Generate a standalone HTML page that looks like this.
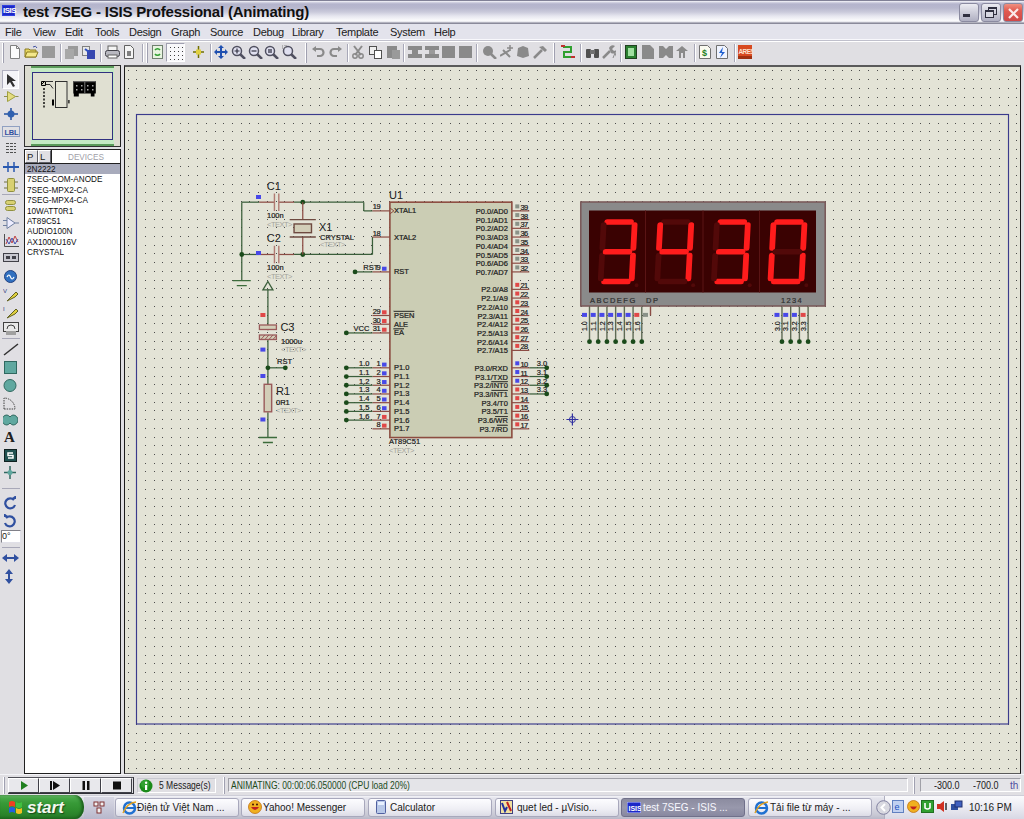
<!DOCTYPE html><html><head><meta charset="utf-8"><style>
*{margin:0;padding:0;box-sizing:border-box}
html,body{width:1024px;height:819px;overflow:hidden;background:#e0dfe3;font-family:"Liberation Sans",sans-serif;position:relative}
.a{position:absolute}
.t{position:absolute;white-space:nowrap;line-height:1}
</style></head><body><div class="a" style="left:0;top:0;width:1024px;height:24px;background:linear-gradient(#808096 0px,#808096 1px,#fbfbfd 1px,#d8d8e6 2px,#b4b4cc 4px,#b8b8ce 8px,#cacadb 12px,#e6e6ef 16px,#f4f4f8 19px,#fbfbfd 21px,#dcdce4 22px,#8a8a9a 23px,#8a8a9a 24px)"></div><div class="a" style="left:2px;top:5px;width:13px;height:11px;background:#1c28c8;border:1px solid #3040e0"></div><div class="t" style="left:3px;top:7px;font-size:8px;color:#fff;font-weight:bold;letter-spacing:-0.5px">ISIS</div><div class="t" id="title" style="left:23px;top:4px;font-size:15px;font-weight:bold;color:#101010;letter-spacing:-0.2px">test 7SEG - ISIS Professional (Animating)</div><div class="a" style="left:959px;top:3px;width:20px;height:19px;border-radius:3px;border:1px solid #8a8aa0;background:linear-gradient(#ececf2,#d0d0dc 45%,#b0b0c2)"><div class="a" style="left:3px;top:10px;width:7px;height:3px;background:#303040"></div></div><div class="a" style="left:981px;top:3px;width:20px;height:19px;border-radius:3px;border:1px solid #8a8aa0;background:linear-gradient(#ececf2,#d0d0dc 45%,#b0b0c2)"><div class="a" style="left:6px;top:3px;width:9px;height:8px;border:1px solid #303040;border-top-width:2px"></div><div class="a" style="left:3px;top:6px;width:9px;height:8px;border:1px solid #303040;border-top-width:2px;background:#d8d8e2"></div></div><div class="a" style="left:1003px;top:3px;width:20px;height:19px;border-radius:3px;border:1px solid #8a8aa0;background:linear-gradient(#f09080,#e05a50 40%,#d04848)"><svg class="a" style="left:2px;top:2px" width="15" height="15"><path d="M3 3L12 12M12 3L3 12" stroke="#fbe8e8" stroke-width="2.2"/></svg></div><div class="a" style="left:0;top:24px;width:1024px;height:15px;background:#e3e3ec"></div><div class="a" style="left:0;top:39px;width:1024px;height:1px;background:#f8f8fc"></div><div class="a" style="left:0;top:40px;width:1024px;height:1px;background:#c0c0cc"></div><div class="a" style="left:0;top:41px;width:1024px;height:1px;background:#fff"></div><div class="t" style="left:5px;top:27px;font-size:11px;color:#202020;letter-spacing:-0.3px">File</div><div class="t" style="left:33px;top:27px;font-size:11px;color:#202020;letter-spacing:-0.3px">View</div><div class="t" style="left:65px;top:27px;font-size:11px;color:#202020;letter-spacing:-0.3px">Edit</div><div class="t" style="left:95px;top:27px;font-size:11px;color:#202020;letter-spacing:-0.3px">Tools</div><div class="t" style="left:129px;top:27px;font-size:11px;color:#202020;letter-spacing:-0.3px">Design</div><div class="t" style="left:171px;top:27px;font-size:11px;color:#202020;letter-spacing:-0.3px">Graph</div><div class="t" style="left:210px;top:27px;font-size:11px;color:#202020;letter-spacing:-0.3px">Source</div><div class="t" style="left:253px;top:27px;font-size:11px;color:#202020;letter-spacing:-0.3px">Debug</div><div class="t" style="left:292px;top:27px;font-size:11px;color:#202020;letter-spacing:-0.3px">Library</div><div class="t" style="left:336px;top:27px;font-size:11px;color:#202020;letter-spacing:-0.3px">Template</div><div class="t" style="left:390px;top:27px;font-size:11px;color:#202020;letter-spacing:-0.3px">System</div><div class="t" style="left:434px;top:27px;font-size:11px;color:#202020;letter-spacing:-0.3px">Help</div><div class="a" style="left:0;top:42px;width:1024px;height:22px;background:#e0dfe3"></div><div class="a" style="left:2px;top:43px;width:2px;height:20px;border-left:1px solid #fff;border-right:1px solid #a0a0b0"></div><div class="a" style="left:146px;top:43px;width:2px;height:20px;border-left:1px solid #fff;border-right:1px solid #a0a0b0"></div><div class="a" style="left:305px;top:43px;width:2px;height:20px;border-left:1px solid #fff;border-right:1px solid #a0a0b0"></div><div class="a" style="left:553px;top:43px;width:2px;height:20px;border-left:1px solid #fff;border-right:1px solid #a0a0b0"></div><div class="a" style="left:60px;top:44px;width:1px;height:18px;background:#a8a8b8"></div><div class="a" style="left:61px;top:44px;width:1px;height:18px;background:#fff"></div><div class="a" style="left:100px;top:44px;width:1px;height:18px;background:#a8a8b8"></div><div class="a" style="left:101px;top:44px;width:1px;height:18px;background:#fff"></div><div class="a" style="left:142px;top:44px;width:1px;height:18px;background:#a8a8b8"></div><div class="a" style="left:143px;top:44px;width:1px;height:18px;background:#fff"></div><div class="a" style="left:210px;top:44px;width:1px;height:18px;background:#a8a8b8"></div><div class="a" style="left:211px;top:44px;width:1px;height:18px;background:#fff"></div><div class="a" style="left:347px;top:44px;width:1px;height:18px;background:#a8a8b8"></div><div class="a" style="left:348px;top:44px;width:1px;height:18px;background:#fff"></div><div class="a" style="left:403px;top:44px;width:1px;height:18px;background:#a8a8b8"></div><div class="a" style="left:404px;top:44px;width:1px;height:18px;background:#fff"></div><div class="a" style="left:476px;top:44px;width:1px;height:18px;background:#a8a8b8"></div><div class="a" style="left:477px;top:44px;width:1px;height:18px;background:#fff"></div><div class="a" style="left:580px;top:44px;width:1px;height:18px;background:#a8a8b8"></div><div class="a" style="left:581px;top:44px;width:1px;height:18px;background:#fff"></div><div class="a" style="left:620px;top:44px;width:1px;height:18px;background:#a8a8b8"></div><div class="a" style="left:621px;top:44px;width:1px;height:18px;background:#fff"></div><div class="a" style="left:694px;top:44px;width:1px;height:18px;background:#a8a8b8"></div><div class="a" style="left:695px;top:44px;width:1px;height:18px;background:#fff"></div><div class="a" style="left:734px;top:44px;width:1px;height:18px;background:#a8a8b8"></div><div class="a" style="left:735px;top:44px;width:1px;height:18px;background:#fff"></div><svg class="a" style="left:9px;top:45px" width="12" height="14"><path d="M1.5 .5h6l3 3v10h-9z" fill="#fbfbfb" stroke="#808080"/><path d="M7.5 .5v3h3" fill="none" stroke="#808080"/></svg><svg class="a" style="left:24px;top:45px" width="15" height="14"><path d="M1 4h4l1 1h6v7H1z" fill="#e8d860" stroke="#8a7a20"/><path d="M3 7h11l-2 5H1z" fill="#f4e88a" stroke="#8a7a20"/><path d="M9 2q3-2 4 1" fill="none" stroke="#4050a0"/></svg><svg class="a" style="left:42px;top:45px" width="14" height="14"><rect x="0" y="1" width="13" height="12" fill="#9a9a9a"/></svg><svg class="a" style="left:65px;top:45px" width="14" height="14"><rect x="3" y="1" width="10" height="10" fill="#9a9a9a"/><rect x="0" y="4" width="9" height="10" fill="#a8a8a8"/></svg><svg class="a" style="left:82px;top:45px" width="14" height="14"><rect x="0.5" y="1.5" width="7" height="9" fill="#e8e8e8" stroke="#808080"/><rect x="5" y="5" width="8" height="9" fill="#3848b0"/><path d="M3 4l4 3" stroke="#3050c0" stroke-width="2"/></svg><svg class="a" style="left:105px;top:45px" width="15" height="14"><rect x="3" y="1" width="9" height="5" fill="#f4f4f4" stroke="#606060"/><rect x="0.5" y="5.5" width="14" height="6" rx="2" fill="#b8b8c0" stroke="#404048"/><rect x="3" y="10" width="9" height="3" fill="#fff" stroke="#606060"/></svg><svg class="a" style="left:124px;top:45px" width="11" height="14"><path d="M.5 .5h6l3 3v10h-9z" fill="#f4f4f4" stroke="#606060"/><rect x="3" y="6" width="4" height="5" fill="#808080"/></svg><svg class="a" style="left:152px;top:45px" width="12" height="14"><rect x=".5" y=".5" width="10" height="13" fill="#e8f4e0" stroke="#708070"/><path d="M3 5a3 3 0 0 1 5 0M8 9a3 3 0 0 1-5 0" fill="none" stroke="#30a030" stroke-width="1.5"/></svg><div class="a" style="left:166px;top:43px;width:19px;height:19px;background:#f8f8fa;border:1px solid;border-color:#a0a0b0 #fff #fff #a0a0b0"></div><svg class="a" style="left:168px;top:45px" width="16" height="16"><rect x="2" y="2" width="1" height="1" fill="#404040"/><rect x="2" y="6" width="1" height="1" fill="#404040"/><rect x="2" y="10" width="1" height="1" fill="#404040"/><rect x="2" y="14" width="1" height="1" fill="#404040"/><rect x="6" y="2" width="1" height="1" fill="#404040"/><rect x="6" y="6" width="1" height="1" fill="#404040"/><rect x="6" y="10" width="1" height="1" fill="#404040"/><rect x="6" y="14" width="1" height="1" fill="#404040"/><rect x="10" y="2" width="1" height="1" fill="#404040"/><rect x="10" y="6" width="1" height="1" fill="#404040"/><rect x="10" y="10" width="1" height="1" fill="#404040"/><rect x="10" y="14" width="1" height="1" fill="#404040"/><rect x="14" y="2" width="1" height="1" fill="#404040"/><rect x="14" y="6" width="1" height="1" fill="#404040"/><rect x="14" y="10" width="1" height="1" fill="#404040"/><rect x="14" y="14" width="1" height="1" fill="#404040"/></svg><svg class="a" style="left:193px;top:45px" width="11" height="14"><path d="M5.5 1v12M0 7h11" stroke="#707000" stroke-width="1.5"/><rect x="3" y="4.5" width="5" height="5" fill="#e0d040"/></svg><svg class="a" style="left:214px;top:45px" width="14" height="14"><path d="M7 0l3 3H8v3h3V4l3 3-3 3V8H8v3h2l-3 3-3-3h2V8H3v2L0 7l3-3v2h3V3H4z" fill="#2050b0"/></svg><svg class="a" style="left:231px;top:45px" width="15" height="14"><circle cx="6" cy="6" r="4.5" fill="#e0e0f0" stroke="#505060" stroke-width="1.5"/><path d="M9 9l5 5" stroke="#505060" stroke-width="2.5"/><path d="M3.5 6h5M6 3.5v5" stroke="#303040" stroke-width="1.2"/></svg><svg class="a" style="left:248px;top:45px" width="15" height="14"><circle cx="6" cy="6" r="4.5" fill="#e0e0f0" stroke="#505060" stroke-width="1.5"/><path d="M9 9l5 5" stroke="#505060" stroke-width="2.5"/><path d="M3.5 6h5" stroke="#303040" stroke-width="1.2"/></svg><svg class="a" style="left:264px;top:45px" width="15" height="14"><circle cx="6" cy="6" r="4.5" fill="#e0e0f0" stroke="#505060" stroke-width="1.5"/><path d="M9 9l5 5" stroke="#505060" stroke-width="2.5"/><rect x="4" y="4" width="4" height="4" fill="#707080"/></svg><svg class="a" style="left:282px;top:45px" width="15" height="14"><circle cx="6" cy="6" r="4.5" fill="#e0e0f0" stroke="#505060" stroke-width="1.5"/><path d="M9 9l5 5" stroke="#505060" stroke-width="2.5"/><rect x="0" y="0" width="4" height="3" fill="none" stroke="#808080" stroke-dasharray="1 1"/></svg><svg class="a" style="left:312px;top:45px" width="13" height="14"><path d="M3 4h5a3.5 3.5 0 0 1 0 7H5" fill="none" stroke="#8a8a8a" stroke-width="2.2"/><path d="M0 4l4-3v6z" fill="#8a8a8a"/></svg><svg class="a" style="left:329px;top:45px" width="13" height="14"><path d="M10 4H5a3.5 3.5 0 0 0 0 7h3" fill="none" stroke="#8a8a8a" stroke-width="2.2"/><path d="M13 4l-4-3v6z" fill="#8a8a8a"/></svg><svg class="a" style="left:352px;top:45px" width="12" height="14"><path d="M2 1l7 9M10 1L3 10" stroke="#8a8a8a" stroke-width="2"/><circle cx="3" cy="11" r="2.2" fill="none" stroke="#8a8a8a" stroke-width="1.5"/><circle cx="9" cy="11" r="2.2" fill="none" stroke="#8a8a8a" stroke-width="1.5"/></svg><svg class="a" style="left:369px;top:45px" width="14" height="14"><rect x=".5" y="1.5" width="7" height="8" fill="#eee" stroke="#505050"/><rect x="5.5" y="5.5" width="7" height="8" fill="#fff" stroke="#505050"/></svg><svg class="a" style="left:387px;top:45px" width="14" height="14"><rect x="0" y="1" width="10" height="12" fill="#8a8a8a"/><rect x="5" y="5" width="8" height="9" fill="#9a9a9a"/></svg><svg class="a" style="left:408px;top:45px" width="15" height="14"><rect x="0" y="1" width="14" height="4" fill="#8a8a8a"/><rect x="4" y="5" width="6" height="4" fill="#8a8a8a"/><rect x="0" y="9" width="14" height="4" fill="#8a8a8a"/></svg><svg class="a" style="left:425px;top:45px" width="15" height="14"><rect x="0" y="1" width="14" height="4" fill="#8a8a8a"/><rect x="4" y="5" width="6" height="4" fill="#9a9a9a"/><rect x="0" y="9" width="14" height="4" fill="#8a8a8a"/></svg><svg class="a" style="left:442px;top:45px" width="14" height="14"><rect x="0" y="1" width="13" height="12" fill="#8a8a8a"/></svg><svg class="a" style="left:459px;top:45px" width="14" height="14"><rect x="0" y="1" width="13" height="12" fill="#8a8a8a"/></svg><svg class="a" style="left:482px;top:45px" width="15" height="14"><circle cx="6" cy="6" r="5" fill="#8a8a8a"/><path d="M9 9l5 5" stroke="#8a8a8a" stroke-width="2.5"/></svg><svg class="a" style="left:500px;top:45px" width="14" height="14"><path d="M0 11l10-6M3 5l7 7" stroke="#8a8a8a" stroke-width="2"/><path d="M10 0v6M7 3h6" stroke="#8a8a8a" stroke-width="1.5"/></svg><svg class="a" style="left:516px;top:45px" width="14" height="14"><path d="M2 3l5-2 5 2 1 8-6 2-6-2z" fill="#8a8a8a"/></svg><svg class="a" style="left:533px;top:45px" width="14" height="14"><path d="M1 13l8-8" stroke="#8a8a8a" stroke-width="2.5"/><path d="M6 2l4-1 4 4-2 2z" fill="#8a8a8a"/></svg><svg class="a" style="left:561px;top:45px" width="14" height="14"><path d="M2 2h8v5H3v5h9" fill="none" stroke="#30a030" stroke-width="2"/><path d="M0 1h4M10 12h4" stroke="#c03030" stroke-width="2"/></svg><svg class="a" style="left:586px;top:45px" width="13" height="14"><rect x="0" y="4" width="5" height="9" rx="1" fill="#505050"/><rect x="8" y="4" width="5" height="9" rx="1" fill="#505050"/><rect x="4" y="5" width="5" height="4" fill="#707070"/></svg><svg class="a" style="left:602px;top:45px" width="14" height="14"><path d="M1 13l7-7" stroke="#8a8a8a" stroke-width="2.5"/><path d="M7 3a4 4 0 0 1 6-2l-3 3 2 2 3-1a4 4 0 0 1-6 3z" fill="#8a8a8a"/><path d="M11 13l2-5 2 5" fill="none" stroke="#8a8a8a"/></svg><svg class="a" style="left:625px;top:45px" width="13" height="14"><rect x=".5" y=".5" width="11" height="13" fill="#2a8030" stroke="#204020"/><rect x="3" y="3" width="6" height="8" fill="#a0e0a0"/></svg><svg class="a" style="left:642px;top:45px" width="12" height="14"><path d="M0 0h8l4 4v10H0z" fill="#8a8a8a"/></svg><svg class="a" style="left:659px;top:45px" width="14" height="14"><path d="M0 1h4l3 3 3-3h4v12h-4l-3-3-3 3H0z" fill="#8a8a8a"/></svg><svg class="a" style="left:675px;top:45px" width="14" height="14"><path d="M7 1L1 6h3v7h2V8h2v5h2V6h3z" fill="#8a8a8a"/></svg><svg class="a" style="left:699px;top:45px" width="12" height="14"><path d="M.5 .5h8l3 3v10h-11z" fill="#fafaf0" stroke="#707070"/><text x="3" y="11" font-size="9" font-family="Liberation Sans" fill="#208020" font-weight="bold">$</text></svg><svg class="a" style="left:716px;top:45px" width="12" height="14"><path d="M.5 .5h8l3 3v10h-11z" fill="#f0f4ff" stroke="#707070"/><path d="M7 2L3 8h3l-2 5 5-6H6z" fill="#2060d0"/></svg><svg class="a" style="left:738px;top:45px" width="15" height="14"><rect x="0" y="0" width="14" height="14" fill="#d84a20"/><rect x="0" y="11" width="14" height="3" fill="#a03010"/><text x="0.5" y="9" font-size="6.5" font-family="Liberation Sans" font-weight="bold" fill="#fde0d0" letter-spacing="-0.6">ARES</text></svg><div class="a" style="left:2px;top:70px;width:17px;height:19px;background:#f4f4f8;border:1px solid;border-color:#b0b0c0 #fff #fff #b0b0c0"></div><svg class="a" style="left:6px;top:73px" width="10" height="14"><path d="M1 1v11l3-3 3 5 2-1-3-5h4z" fill="#303030"/></svg><svg class="a" style="left:3px;top:90px" width="16" height="13"><path d="M4.5 1.5l8 5-8 5z" fill="#e4dc80" stroke="#a0a040"/><path d="M1 6.5h3.5M12.5 6.5h3" stroke="#909050"/></svg><svg class="a" style="left:3px;top:108px" width="16" height="12"><path d="M8 0v12M1 6h14" stroke="#2050a0" stroke-width="1.5"/><circle cx="8" cy="6" r="3.5" fill="#3060b0"/></svg><svg class="a" style="left:2px;top:126px" width="18" height="11"><rect x=".5" y=".5" width="17" height="10" fill="none" stroke="#4060a0" stroke-width="1" stroke-dasharray="1 1"/><text x="2.5" y="8.5" font-size="7.5" font-family="Liberation Sans" font-weight="bold" fill="#3050a0" letter-spacing="-0.3">LBL</text></svg><svg class="a" style="left:3px;top:142px" width="16" height="11"><path d="M3 1.5h10M3 4.5h10M3 7.5h10M3 10.5h10" stroke="#505050" stroke-dasharray="3 1"/></svg><svg class="a" style="left:2px;top:161px" width="18" height="12"><path d="M1 6h16" stroke="#2858b0" stroke-width="2"/><path d="M6 1v10M12 1v10" stroke="#2858b0" stroke-width="1.5"/></svg><svg class="a" style="left:4px;top:178px" width="14" height="14"><rect x="3.5" y=".5" width="7" height="13" rx="1" fill="#d8d070" stroke="#909040"/><path d="M0 4h3M0 10h3M11 4h3M11 10h3" stroke="#707040"/></svg><div class="a" style="left:2px;top:194px;width:18px;height:1px;background:#a8a8b8"></div><svg class="a" style="left:4px;top:199px" width="13" height="13"><rect x="1.5" y="1.5" width="10" height="4" rx="2" fill="#d8d070" stroke="#909040"/><rect x="1.5" y="7.5" width="10" height="4" rx="2" fill="#d8d070" stroke="#909040"/></svg><svg class="a" style="left:3px;top:216px" width="16" height="14"><path d="M4 1.5v11l8-5.5z" fill="#eef" stroke="#7080a0"/><path d="M0 4.5h4M0 9.5h4M12 7h4" stroke="#7080a0"/></svg><svg class="a" style="left:3px;top:234px" width="16" height="13"><path d="M1.5 0v12.5H16" fill="none" stroke="#505050"/><path d="M3 10l3-7 3 6 3-7 3 6" fill="none" stroke="#c04040"/><path d="M3 5l3 5 3-6 3 6 3-5" fill="none" stroke="#4050b0"/></svg><svg class="a" style="left:3px;top:253px" width="16" height="9"><rect x=".5" y=".5" width="15" height="8" fill="#c8c8d0" stroke="#404048"/><rect x="3" y="3" width="4" height="3" fill="#404048"/><rect x="9" y="3" width="4" height="3" fill="#404048"/></svg><svg class="a" style="left:4px;top:270px" width="13" height="13"><circle cx="6.5" cy="6.5" r="6" fill="#3070c0" stroke="#204080"/><path d="M3 7q2-4 3.5 0t3.5 0" fill="none" stroke="#fff" stroke-width="1.2"/></svg><svg class="a" style="left:3px;top:287px" width="16" height="15"><text x="0" y="6" font-size="6" font-family="Liberation Sans" fill="#304080">V</text><path d="M4 14l6-6 3-3 2 2-3 3z" fill="#e0d040" stroke="#606020"/></svg><svg class="a" style="left:3px;top:305px" width="16" height="14"><text x="0" y="6" font-size="6" font-family="Liberation Sans" fill="#304080">I</text><path d="M4 13l6-6 3-3 2 2-3 3z" fill="#e0d040" stroke="#606020"/></svg><svg class="a" style="left:3px;top:322px" width="16" height="13"><rect x=".5" y=".5" width="15" height="9" fill="#e8e8e8" stroke="#404040"/><path d="M4 7a4 4 0 0 1 8 0" fill="none" stroke="#404040"/><rect x="3" y="9" width="10" height="4" fill="#a0a0a0"/></svg><div class="a" style="left:2px;top:338px;width:18px;height:1px;background:#a8a8b8"></div><svg class="a" style="left:3px;top:343px" width="16" height="13"><path d="M1 12L15 1" stroke="#303030" stroke-width="1.5"/></svg><svg class="a" style="left:4px;top:361px" width="13" height="13"><rect x=".5" y=".5" width="12" height="12" fill="#60a8a0" stroke="#306860"/></svg><svg class="a" style="left:3px;top:379px" width="14" height="13"><circle cx="7" cy="6.5" r="6" fill="#60a8a0" stroke="#306860"/></svg><svg class="a" style="left:3px;top:397px" width="15" height="13"><path d="M1 12V1a11 11 0 0 1 11 11z" fill="none" stroke="#404040" stroke-dasharray="1.5 1"/></svg><svg class="a" style="left:3px;top:414px" width="15" height="12"><path d="M4 1a5 5 0 0 0 0 10 5 5 0 0 0 3-2 5 5 0 0 0 3 2 5 5 0 0 0 0-10 5 5 0 0 0-3 2 5 5 0 0 0-3-2z" fill="#60a8a0" stroke="#306860"/></svg><div class="t" style="left:4px;top:430px;font-size:15px;font-weight:bold;font-family:'Liberation Serif',serif;color:#202020">A</div><svg class="a" style="left:4px;top:449px" width="13" height="13"><rect x=".5" y=".5" width="12" height="12" fill="#205050" stroke="#102020"/><path d="M9 4H4v2.5h5V9H4" fill="none" stroke="#fff" stroke-width="1.5"/></svg><svg class="a" style="left:3px;top:466px" width="14" height="13"><path d="M7 0v13M1 6.5h12" stroke="#306860" stroke-width="1.5"/><circle cx="7" cy="6.5" r="2.5" fill="#60a8a0"/></svg><div class="a" style="left:2px;top:488px;width:18px;height:1px;background:#a8a8b8"></div><svg class="a" style="left:3px;top:496px" width="14" height="14"><path d="M11 4a5 5 0 1 0 1 5" fill="none" stroke="#3050a0" stroke-width="2.2"/><path d="M8 3h5V-1z" fill="#3050a0"/></svg><svg class="a" style="left:3px;top:514px" width="14" height="14"><path d="M3 4a5 5 0 1 1-1 5" fill="none" stroke="#3050a0" stroke-width="2.2"/><path d="M6 3H1V-1z" fill="#3050a0"/></svg><div class="a" style="left:1px;top:530px;width:20px;height:13px;background:#fff;border:1px solid;border-color:#808088 #e0e0e8 #e0e0e8 #808088"></div><div class="t" style="left:2px;top:532px;font-size:9px;color:#202020">0&#176;</div><div class="a" style="left:2px;top:547px;width:18px;height:1px;background:#a8a8b8"></div><svg class="a" style="left:2px;top:553px" width="17" height="10"><path d="M3 5h11" stroke="#3050a0" stroke-width="2"/><path d="M0 5l5-4v8zM17 5l-5-4v8z" fill="#3050a0"/></svg><svg class="a" style="left:4px;top:569px" width="10" height="15"><path d="M5 3v9" stroke="#3050a0" stroke-width="2"/><path d="M5 0l4 5H1zM5 15l4-5H1z" fill="#3050a0"/></svg><div class="a" style="left:24px;top:65px;width:97px;height:82px;background:#dcdcd0;border:1px solid #303030;border-right-color:#202020"></div><div class="a" style="left:31px;top:66px;width:83px;height:80px;background:#c4eac4;border:1px solid #5a9a5a;border-width:2px 0 2px 0"></div><div class="a" style="left:32px;top:72px;width:81px;height:68px;background:#e0e0d2;border:1px solid #303080"></div><svg class="a" style="left:32px;top:72px" width="81" height="68"><path d="M9.5 9.5h4v4h-4z" fill="#d0d0c0" stroke="#000"/><path d="M14 9.5h7M14 12.5h4l3 4" fill="none" stroke="#303030"/><path d="M10 12l3-3" stroke="#000"/><path d="M12 16v20" stroke="#000" stroke-dasharray="2 1.5" stroke-width="1.4"/><rect x="23.5" y="9.5" width="11.5" height="26" fill="#e4e4d6" stroke="#303030"/><rect x="20" y="27.5" width="2" height="6" fill="#000"/><rect x="36.3" y="28" width="1.2" height="3.4" fill="#000"/><rect x="41.3" y="9" width="22.5" height="12.5" fill="#000"/><rect x="41.8" y="21" width="5" height="3.5" fill="#000"/><rect x="58.8" y="21" width="3.7" height="3.5" fill="#000"/><rect x="41.3" y="9" width="22.5" height="1.2" fill="#606060"/><rect x="52.3" y="10" width="1" height="11" fill="#777"/><rect x="44" y="13" width="1.5" height="1.5" fill="#aaa"/><rect x="44" y="17" width="1.5" height="1.5" fill="#aaa"/><rect x="49" y="13" width="1.5" height="1.5" fill="#aaa"/><rect x="49" y="17" width="1.5" height="1.5" fill="#aaa"/><rect x="55" y="13" width="1.5" height="1.5" fill="#aaa"/><rect x="55" y="17" width="1.5" height="1.5" fill="#aaa"/><rect x="60" y="13" width="1.5" height="1.5" fill="#aaa"/><rect x="60" y="17" width="1.5" height="1.5" fill="#aaa"/></svg><div class="a" style="left:24px;top:149px;width:97px;height:625px;background:#fff;border:1px solid #202020"></div><div class="a" style="left:25px;top:150px;width:13px;height:13px;background:#e0dfe3;border:1px solid;border-color:#fff #606068 #606068 #fff"></div><div class="a" style="left:38px;top:150px;width:13px;height:13px;background:#e0dfe3;border:1px solid;border-color:#fff #606068 #606068 #fff"></div><div class="a" style="left:25px;top:163px;width:95px;height:1px;background:#202020"></div><div class="a" style="left:51px;top:150px;width:1px;height:13px;background:#202020"></div><div class="t" style="left:27px;top:152px;font-size:9.5px;color:#202020">P</div><div class="t" style="left:40px;top:152px;font-size:9.5px;color:#202020">L</div><div class="t" style="left:68px;top:152px;font-size:9.5px;color:#a0a0a8;transform:scaleX(.86);transform-origin:0 0">DEVICES</div><div class="a" style="left:25px;top:164px;width:95px;height:10px;background:#a8abbc"></div><div class="t" style="left:27px;top:164.0px;font-size:9.5px;color:#101010;transform:scaleX(.86);transform-origin:0 0">2N2222</div><div class="t" style="left:27px;top:174.4px;font-size:9.5px;color:#101010;transform:scaleX(.86);transform-origin:0 0">7SEG-COM-ANODE</div><div class="t" style="left:27px;top:184.8px;font-size:9.5px;color:#101010;transform:scaleX(.86);transform-origin:0 0">7SEG-MPX2-CA</div><div class="t" style="left:27px;top:195.1px;font-size:9.5px;color:#101010;transform:scaleX(.86);transform-origin:0 0">7SEG-MPX4-CA</div><div class="t" style="left:27px;top:205.5px;font-size:9.5px;color:#101010;transform:scaleX(.86);transform-origin:0 0">10WATT0R1</div><div class="t" style="left:27px;top:215.9px;font-size:9.5px;color:#101010;transform:scaleX(.86);transform-origin:0 0">AT89C51</div><div class="t" style="left:27px;top:226.2px;font-size:9.5px;color:#101010;transform:scaleX(.86);transform-origin:0 0">AUDIO100N</div><div class="t" style="left:27px;top:236.6px;font-size:9.5px;color:#101010;transform:scaleX(.86);transform-origin:0 0">AX1000U16V</div><div class="t" style="left:27px;top:247.0px;font-size:9.5px;color:#101010;transform:scaleX(.86);transform-origin:0 0">CRYSTAL</div><div class="a" style="left:124px;top:65px;width:897px;height:709px;background:#e3e3d6;border-left:1px solid #1a1a1a;border-top:2px solid #5a5a5a;border-right:1px solid #1a1a1a;border-bottom:1px solid #5a5a5a"></div><svg class="a" style="left:125px;top:67px" width="895" height="706" font-family="Liberation Sans"><g transform="translate(-125 -67)"><defs><path id="dr" d="M128 0h1v1h-1zM136 0h1v1h-1zM145 0h1v1h-1zM154 0h1v1h-1zM162 0h1v1h-1zM171 0h1v1h-1zM180 0h1v1h-1zM188 0h1v1h-1zM197 0h1v1h-1zM206 0h1v1h-1zM215 0h1v1h-1zM223 0h1v1h-1zM232 0h1v1h-1zM241 0h1v1h-1zM249 0h1v1h-1zM258 0h1v1h-1zM267 0h1v1h-1zM276 0h1v1h-1zM284 0h1v1h-1zM293 0h1v1h-1zM302 0h1v1h-1zM310 0h1v1h-1zM319 0h1v1h-1zM328 0h1v1h-1zM337 0h1v1h-1zM345 0h1v1h-1zM354 0h1v1h-1zM363 0h1v1h-1zM371 0h1v1h-1zM380 0h1v1h-1zM389 0h1v1h-1zM398 0h1v1h-1zM406 0h1v1h-1zM415 0h1v1h-1zM424 0h1v1h-1zM432 0h1v1h-1zM441 0h1v1h-1zM450 0h1v1h-1zM459 0h1v1h-1zM467 0h1v1h-1zM476 0h1v1h-1zM485 0h1v1h-1zM493 0h1v1h-1zM502 0h1v1h-1zM511 0h1v1h-1zM520 0h1v1h-1zM528 0h1v1h-1zM537 0h1v1h-1zM546 0h1v1h-1zM554 0h1v1h-1zM563 0h1v1h-1zM572 0h1v1h-1zM581 0h1v1h-1zM589 0h1v1h-1zM598 0h1v1h-1zM607 0h1v1h-1zM615 0h1v1h-1zM624 0h1v1h-1zM633 0h1v1h-1zM642 0h1v1h-1zM650 0h1v1h-1zM659 0h1v1h-1zM668 0h1v1h-1zM676 0h1v1h-1zM685 0h1v1h-1zM694 0h1v1h-1zM703 0h1v1h-1zM711 0h1v1h-1zM720 0h1v1h-1zM729 0h1v1h-1zM737 0h1v1h-1zM746 0h1v1h-1zM755 0h1v1h-1zM764 0h1v1h-1zM772 0h1v1h-1zM781 0h1v1h-1zM790 0h1v1h-1zM798 0h1v1h-1zM807 0h1v1h-1zM816 0h1v1h-1zM825 0h1v1h-1zM833 0h1v1h-1zM842 0h1v1h-1zM851 0h1v1h-1zM859 0h1v1h-1zM868 0h1v1h-1zM877 0h1v1h-1zM886 0h1v1h-1zM894 0h1v1h-1zM903 0h1v1h-1zM912 0h1v1h-1zM920 0h1v1h-1zM929 0h1v1h-1zM938 0h1v1h-1zM947 0h1v1h-1zM955 0h1v1h-1zM964 0h1v1h-1zM973 0h1v1h-1zM981 0h1v1h-1zM990 0h1v1h-1zM999 0h1v1h-1zM1008 0h1v1h-1zM1016 0h1v1h-1z" fill="#4c4c4c"/></defs><use href="#dr" y="70"/><use href="#dr" y="79"/><use href="#dr" y="88"/><use href="#dr" y="97"/><use href="#dr" y="105"/><use href="#dr" y="114"/><use href="#dr" y="123"/><use href="#dr" y="131"/><use href="#dr" y="140"/><use href="#dr" y="149"/><use href="#dr" y="158"/><use href="#dr" y="166"/><use href="#dr" y="175"/><use href="#dr" y="184"/><use href="#dr" y="192"/><use href="#dr" y="201"/><use href="#dr" y="210"/><use href="#dr" y="219"/><use href="#dr" y="227"/><use href="#dr" y="236"/><use href="#dr" y="245"/><use href="#dr" y="253"/><use href="#dr" y="262"/><use href="#dr" y="271"/><use href="#dr" y="280"/><use href="#dr" y="288"/><use href="#dr" y="297"/><use href="#dr" y="306"/><use href="#dr" y="315"/><use href="#dr" y="323"/><use href="#dr" y="332"/><use href="#dr" y="341"/><use href="#dr" y="349"/><use href="#dr" y="358"/><use href="#dr" y="367"/><use href="#dr" y="376"/><use href="#dr" y="384"/><use href="#dr" y="393"/><use href="#dr" y="402"/><use href="#dr" y="410"/><use href="#dr" y="419"/><use href="#dr" y="428"/><use href="#dr" y="437"/><use href="#dr" y="445"/><use href="#dr" y="454"/><use href="#dr" y="463"/><use href="#dr" y="471"/><use href="#dr" y="480"/><use href="#dr" y="489"/><use href="#dr" y="498"/><use href="#dr" y="506"/><use href="#dr" y="515"/><use href="#dr" y="524"/><use href="#dr" y="532"/><use href="#dr" y="541"/><use href="#dr" y="550"/><use href="#dr" y="559"/><use href="#dr" y="567"/><use href="#dr" y="576"/><use href="#dr" y="585"/><use href="#dr" y="593"/><use href="#dr" y="602"/><use href="#dr" y="611"/><use href="#dr" y="620"/><use href="#dr" y="628"/><use href="#dr" y="637"/><use href="#dr" y="646"/><use href="#dr" y="655"/><use href="#dr" y="663"/><use href="#dr" y="672"/><use href="#dr" y="681"/><use href="#dr" y="689"/><use href="#dr" y="698"/><use href="#dr" y="707"/><use href="#dr" y="716"/><use href="#dr" y="724"/><use href="#dr" y="733"/><use href="#dr" y="742"/><use href="#dr" y="750"/><use href="#dr" y="759"/><use href="#dr" y="768"/><rect x="136.5" y="114.5" width="872" height="609.5" fill="none" stroke="#3a3a8c" stroke-width="1.15"/><path d="M241.77 202.17L259.19 202.17" stroke="#3a5e3a" stroke-width="1.25" fill="none"/><path d="M294.05 202.17L363.75 202.17" stroke="#3a5e3a" stroke-width="1.25" fill="none"/><path d="M363.75 202.17L363.75 210.89" stroke="#3a5e3a" stroke-width="1.25" fill="none"/><path d="M363.75 210.89L372.46 210.89" stroke="#3a5e3a" stroke-width="1.25" fill="none"/><path d="M259.19 202.17L274.44 202.17" stroke="#8c4c44" stroke-width="1.25" fill="none"/><path d="M278.8 202.17L294.05 202.17" stroke="#8c4c44" stroke-width="1.25" fill="none"/><path d="M241.77 254.48L259.19 254.48" stroke="#3a5e3a" stroke-width="1.25" fill="none"/><path d="M294.05 254.48L372.46 254.48" stroke="#3a5e3a" stroke-width="1.25" fill="none"/><path d="M372.46 254.48L372.46 237.04" stroke="#3a5e3a" stroke-width="1.25" fill="none"/><path d="M259.19 254.48L274.44 254.48" stroke="#8c4c44" stroke-width="1.25" fill="none"/><path d="M278.8 254.48L294.05 254.48" stroke="#8c4c44" stroke-width="1.25" fill="none"/><path d="M241.77 202.17L241.77 280.63" stroke="#3a5e3a" stroke-width="1.25" fill="none"/><circle cx="241.77" cy="254.48" r="2.4" fill="#1a4a1a"/><circle cx="302.76" cy="202.17" r="2.4" fill="#1a4a1a"/><circle cx="302.76" cy="254.48" r="2.4" fill="#1a4a1a"/><path d="M274.44 193.45V210.89M278.8 193.45V210.89" stroke="#b07a72" stroke-width="1.4"/><path d="M274.44 245.76V263.2M278.8 245.76V263.2" stroke="#b07a72" stroke-width="1.4"/><path d="M302.76 202.17L302.76 219.61" stroke="#8c4c44" stroke-width="1.25" fill="none"/><path d="M302.76 237.04L302.76 254.48" stroke="#8c4c44" stroke-width="1.25" fill="none"/><path d="M289.69 219.61H315.83M289.69 237.04H315.83" stroke="#6e4a40" stroke-width="1.4"/><rect x="294.05" y="223.97" width="17.43" height="8.72" fill="#d2ceb8" stroke="#6e4a40" stroke-width="1.4"/><path d="M232.77 280.63H250.77M236.77 285.63H246.77" stroke="#3b6b3b" stroke-width="1.4"/><path d="M267.91 289.35L267.91 330.32" stroke="#3a5e3a" stroke-width="1.25" fill="none"/><path d="M267.91 335.56L267.91 385.25" stroke="#3a5e3a" stroke-width="1.25" fill="none"/><path d="M267.91 412.27L267.91 437.56" stroke="#3a5e3a" stroke-width="1.25" fill="none"/><path d="M267.91 281.5L272.91 289.79L262.91 289.79z" fill="none" stroke="#3a5e3a" stroke-width="1.3"/><rect x="259.41" y="325" width="17" height="4.5" fill="#d2ceb8" stroke="#9a5a5a" stroke-width="1.3"/><rect x="259.41" y="335" width="17" height="4.5" fill="#d2ceb8" stroke="#9a5a5a" stroke-width="1.3"/><path d="M260.91 339.5l4-4.5M264.91 339.5l4-4.5M268.91 339.5l4-4.5M272.91 339.5l4-4.5" stroke="#9a5a5a" stroke-width="1"/><path d="M267.91 367.81L285.33 367.81" stroke="#3a5e3a" stroke-width="1.25" fill="none"/><circle cx="267.91" cy="367.81" r="2.4" fill="#1a4a1a"/><circle cx="285.33" cy="367.81" r="2.4" fill="#1a4a1a"/><rect x="264.16" y="384.3" width="7.5" height="27.5" fill="#d2ceb8" stroke="#9a5a5a" stroke-width="1.4"/><path d="M258.91 437.56H276.91M262.91 442.56H272.91" stroke="#3b6b3b" stroke-width="1.4"/><rect x="260.4" y="313" width="5" height="4" fill="#e04848"/><rect x="260.4" y="347.6" width="5" height="4" fill="#4848e8"/><rect x="260.4" y="374" width="5" height="4" fill="#4848e8"/><rect x="260.4" y="417.5" width="5" height="4" fill="#4848e8"/><rect x="256" y="195" width="5" height="4" fill="#4848e8"/><rect x="256" y="251" width="5" height="4" fill="#4848e8"/><text x="266.7" y="190.42" font-size="11" fill="#202020" font-weight="normal" text-anchor="start" >C1</text><text x="267" y="218.47" font-size="7.5" fill="#202020" font-weight="normal" text-anchor="start"  stroke="#202020" stroke-width="0.22">100n</text><text x="267" y="227.47" font-size="7.5" fill="#a4a49c" font-weight="normal" text-anchor="start" letter-spacing="-0.5">&lt;TEXT&gt;</text><text x="266.7" y="242.02" font-size="11" fill="#202020" font-weight="normal" text-anchor="start" >C2</text><text x="267" y="270.47" font-size="7.5" fill="#202020" font-weight="normal" text-anchor="start"  stroke="#202020" stroke-width="0.22">100n</text><text x="267" y="279.47" font-size="7.5" fill="#a4a49c" font-weight="normal" text-anchor="start" letter-spacing="-0.5">&lt;TEXT&gt;</text><text x="319" y="231.02" font-size="11" fill="#202020" font-weight="normal" text-anchor="start" >X1</text><text x="320" y="240.47" font-size="7.5" fill="#202020" font-weight="normal" text-anchor="start"  stroke="#202020" stroke-width="0.22">CRYSTAL</text><text x="320" y="247.47" font-size="7.5" fill="#a4a49c" font-weight="normal" text-anchor="start" letter-spacing="-0.5">&lt;TEXT&gt;</text><text x="280.4" y="331.02" font-size="11" fill="#202020" font-weight="normal" text-anchor="start" >C3</text><text x="281" y="344.47" font-size="7.5" fill="#202020" font-weight="normal" text-anchor="start"  stroke="#202020" stroke-width="0.22">1000u</text><text x="281" y="352.47" font-size="7.5" fill="#a4a49c" font-weight="normal" text-anchor="start" letter-spacing="-0.5">&lt;TEXT&gt;</text><text x="277" y="364.47" font-size="7.5" fill="#202020" font-weight="normal" text-anchor="start"  stroke="#202020" stroke-width="0.22">RST</text><text x="276" y="395.02" font-size="11" fill="#202020" font-weight="normal" text-anchor="start" >R1</text><text x="276" y="405.47" font-size="7.5" fill="#202020" font-weight="normal" text-anchor="start"  stroke="#202020" stroke-width="0.22">0R1</text><text x="276" y="413.47" font-size="7.5" fill="#a4a49c" font-weight="normal" text-anchor="start" letter-spacing="-0.5">&lt;TEXT&gt;</text><rect x="389.89" y="202.17" width="121.98" height="235.39" fill="#cbcdb4" stroke="#8c4c40" stroke-width="1.6"/><text x="389" y="199.02" font-size="11" fill="#202020" font-weight="normal" text-anchor="start" >U1</text><text x="389" y="443.77" font-size="7.5" fill="#202020" font-weight="normal" text-anchor="start"  stroke="#202020" stroke-width="0.22">AT89C51</text><text x="389" y="452.77" font-size="7.5" fill="#a4a49c" font-weight="normal" text-anchor="start" letter-spacing="-0.5">&lt;TEXT&gt;</text><path d="M372.46 210.89L389.89 210.89" stroke="#8c4c44" stroke-width="1.2" fill="none"/><text x="393.89" y="213.36" font-size="7.5" fill="#202020" font-weight="normal" text-anchor="start"  stroke="#202020" stroke-width="0.22">XTAL1</text><text x="380.39" y="209.36" font-size="7.5" fill="#202020" font-weight="normal" text-anchor="end" letter-spacing="-0.4" stroke="#202020" stroke-width="0.22">19</text><path d="M372.46 237.04L389.89 237.04" stroke="#8c4c44" stroke-width="1.2" fill="none"/><text x="393.89" y="239.51" font-size="7.5" fill="#202020" font-weight="normal" text-anchor="start"  stroke="#202020" stroke-width="0.22">XTAL2</text><text x="380.39" y="235.51" font-size="7.5" fill="#202020" font-weight="normal" text-anchor="end" letter-spacing="-0.4" stroke="#202020" stroke-width="0.22">18</text><path d="M372.46 271.91L389.89 271.91" stroke="#8c4c44" stroke-width="1.2" fill="none"/><text x="393.89" y="274.38" font-size="7.5" fill="#202020" font-weight="normal" text-anchor="start"  stroke="#202020" stroke-width="0.22">RST</text><text x="380.39" y="270.38" font-size="7.5" fill="#202020" font-weight="normal" text-anchor="end" letter-spacing="-0.4" stroke="#202020" stroke-width="0.22">9</text><rect x="382.04" y="266.71" width="4.5" height="4" fill="#4848e8"/><path d="M372.46 315.5L389.89 315.5" stroke="#8c4c44" stroke-width="1.2" fill="none"/><text x="393.89" y="317.97" font-size="7.5" fill="#202020" font-weight="normal" text-anchor="start" text-decoration="overline" stroke="#202020" stroke-width="0.22">PSEN</text><text x="380.39" y="313.97" font-size="7.5" fill="#202020" font-weight="normal" text-anchor="end" letter-spacing="-0.4" stroke="#202020" stroke-width="0.22">29</text><rect x="382.04" y="310.3" width="4.5" height="4" fill="#e04848"/><path d="M372.46 324.22L389.89 324.22" stroke="#8c4c44" stroke-width="1.2" fill="none"/><text x="393.89" y="326.69" font-size="7.5" fill="#202020" font-weight="normal" text-anchor="start"  stroke="#202020" stroke-width="0.22">ALE</text><text x="380.39" y="322.69" font-size="7.5" fill="#202020" font-weight="normal" text-anchor="end" letter-spacing="-0.4" stroke="#202020" stroke-width="0.22">30</text><rect x="382.04" y="319.02" width="4.5" height="4" fill="#e04848"/><path d="M372.46 332.94L389.89 332.94" stroke="#8c4c44" stroke-width="1.2" fill="none"/><text x="393.89" y="335.41" font-size="7.5" fill="#202020" font-weight="normal" text-anchor="start" text-decoration="overline" stroke="#202020" stroke-width="0.22">EA</text><text x="380.39" y="331.41" font-size="7.5" fill="#202020" font-weight="normal" text-anchor="end" letter-spacing="-0.4" stroke="#202020" stroke-width="0.22">31</text><rect x="382.04" y="327.74" width="4.5" height="4" fill="#e04848"/><path d="M372.46 367.81L389.89 367.81" stroke="#8c4c44" stroke-width="1.2" fill="none"/><text x="393.89" y="370.28" font-size="7.5" fill="#202020" font-weight="normal" text-anchor="start"  stroke="#202020" stroke-width="0.22">P1.0</text><text x="380.39" y="366.28" font-size="7.5" fill="#202020" font-weight="normal" text-anchor="end" letter-spacing="-0.4" stroke="#202020" stroke-width="0.22">1</text><rect x="382.04" y="362.61" width="4.5" height="4" fill="#4848e8"/><path d="M372.46 376.53L389.89 376.53" stroke="#8c4c44" stroke-width="1.2" fill="none"/><text x="393.89" y="379" font-size="7.5" fill="#202020" font-weight="normal" text-anchor="start"  stroke="#202020" stroke-width="0.22">P1.1</text><text x="380.39" y="375" font-size="7.5" fill="#202020" font-weight="normal" text-anchor="end" letter-spacing="-0.4" stroke="#202020" stroke-width="0.22">2</text><rect x="382.04" y="371.33" width="4.5" height="4" fill="#4848e8"/><path d="M372.46 385.25L389.89 385.25" stroke="#8c4c44" stroke-width="1.2" fill="none"/><text x="393.89" y="387.72" font-size="7.5" fill="#202020" font-weight="normal" text-anchor="start"  stroke="#202020" stroke-width="0.22">P1.2</text><text x="380.39" y="383.72" font-size="7.5" fill="#202020" font-weight="normal" text-anchor="end" letter-spacing="-0.4" stroke="#202020" stroke-width="0.22">3</text><rect x="382.04" y="380.05" width="4.5" height="4" fill="#4848e8"/><path d="M372.46 393.97L389.89 393.97" stroke="#8c4c44" stroke-width="1.2" fill="none"/><text x="393.89" y="396.43" font-size="7.5" fill="#202020" font-weight="normal" text-anchor="start"  stroke="#202020" stroke-width="0.22">P1.3</text><text x="380.39" y="392.43" font-size="7.5" fill="#202020" font-weight="normal" text-anchor="end" letter-spacing="-0.4" stroke="#202020" stroke-width="0.22">4</text><rect x="382.04" y="388.77" width="4.5" height="4" fill="#4848e8"/><path d="M372.46 402.68L389.89 402.68" stroke="#8c4c44" stroke-width="1.2" fill="none"/><text x="393.89" y="405.15" font-size="7.5" fill="#202020" font-weight="normal" text-anchor="start"  stroke="#202020" stroke-width="0.22">P1.4</text><text x="380.39" y="401.15" font-size="7.5" fill="#202020" font-weight="normal" text-anchor="end" letter-spacing="-0.4" stroke="#202020" stroke-width="0.22">5</text><rect x="382.04" y="397.48" width="4.5" height="4" fill="#4848e8"/><path d="M372.46 411.4L389.89 411.4" stroke="#8c4c44" stroke-width="1.2" fill="none"/><text x="393.89" y="413.87" font-size="7.5" fill="#202020" font-weight="normal" text-anchor="start"  stroke="#202020" stroke-width="0.22">P1.5</text><text x="380.39" y="409.87" font-size="7.5" fill="#202020" font-weight="normal" text-anchor="end" letter-spacing="-0.4" stroke="#202020" stroke-width="0.22">6</text><rect x="382.04" y="406.2" width="4.5" height="4" fill="#4848e8"/><path d="M372.46 420.12L389.89 420.12" stroke="#8c4c44" stroke-width="1.2" fill="none"/><text x="393.89" y="422.59" font-size="7.5" fill="#202020" font-weight="normal" text-anchor="start"  stroke="#202020" stroke-width="0.22">P1.6</text><text x="380.39" y="418.59" font-size="7.5" fill="#202020" font-weight="normal" text-anchor="end" letter-spacing="-0.4" stroke="#202020" stroke-width="0.22">7</text><rect x="382.04" y="414.92" width="4.5" height="4" fill="#e04848"/><path d="M372.46 428.84L389.89 428.84" stroke="#8c4c44" stroke-width="1.2" fill="none"/><text x="393.89" y="431.31" font-size="7.5" fill="#202020" font-weight="normal" text-anchor="start"  stroke="#202020" stroke-width="0.22">P1.7</text><text x="380.39" y="427.31" font-size="7.5" fill="#202020" font-weight="normal" text-anchor="end" letter-spacing="-0.4" stroke="#202020" stroke-width="0.22">8</text><rect x="382.04" y="423.64" width="4.5" height="4" fill="#e04848"/><path d="M511.87 210.89L529.3 210.89" stroke="#8c4c44" stroke-width="1.2" fill="none"/><text x="507.87" y="213.96" font-size="7.5" fill="#202020" font-weight="normal" text-anchor="end"  stroke="#202020" stroke-width="0.22">P0.0/AD0</text><text x="520.47" y="209.96" font-size="7.5" fill="#202020" font-weight="normal" text-anchor="start" letter-spacing="-0.6" stroke="#202020" stroke-width="0.22">39</text><rect x="515.27" y="204.39" width="4" height="4" fill="#8a9288"/><path d="M511.87 219.61L529.3 219.61" stroke="#8c4c44" stroke-width="1.2" fill="none"/><text x="507.87" y="222.67" font-size="7.5" fill="#202020" font-weight="normal" text-anchor="end"  stroke="#202020" stroke-width="0.22">P0.1/AD1</text><text x="520.47" y="218.67" font-size="7.5" fill="#202020" font-weight="normal" text-anchor="start" letter-spacing="-0.6" stroke="#202020" stroke-width="0.22">38</text><rect x="515.27" y="213.11" width="4" height="4" fill="#8a9288"/><path d="M511.87 228.32L529.3 228.32" stroke="#8c4c44" stroke-width="1.2" fill="none"/><text x="507.87" y="231.39" font-size="7.5" fill="#202020" font-weight="normal" text-anchor="end"  stroke="#202020" stroke-width="0.22">P0.2/AD2</text><text x="520.47" y="227.39" font-size="7.5" fill="#202020" font-weight="normal" text-anchor="start" letter-spacing="-0.6" stroke="#202020" stroke-width="0.22">37</text><rect x="515.27" y="221.82" width="4" height="4" fill="#8a9288"/><path d="M511.87 237.04L529.3 237.04" stroke="#8c4c44" stroke-width="1.2" fill="none"/><text x="507.87" y="240.11" font-size="7.5" fill="#202020" font-weight="normal" text-anchor="end"  stroke="#202020" stroke-width="0.22">P0.3/AD3</text><text x="520.47" y="236.11" font-size="7.5" fill="#202020" font-weight="normal" text-anchor="start" letter-spacing="-0.6" stroke="#202020" stroke-width="0.22">36</text><rect x="515.27" y="230.54" width="4" height="4" fill="#8a9288"/><path d="M511.87 245.76L529.3 245.76" stroke="#8c4c44" stroke-width="1.2" fill="none"/><text x="507.87" y="248.83" font-size="7.5" fill="#202020" font-weight="normal" text-anchor="end"  stroke="#202020" stroke-width="0.22">P0.4/AD4</text><text x="520.47" y="244.83" font-size="7.5" fill="#202020" font-weight="normal" text-anchor="start" letter-spacing="-0.6" stroke="#202020" stroke-width="0.22">35</text><rect x="515.27" y="239.26" width="4" height="4" fill="#8a9288"/><path d="M511.87 254.48L529.3 254.48" stroke="#8c4c44" stroke-width="1.2" fill="none"/><text x="507.87" y="257.55" font-size="7.5" fill="#202020" font-weight="normal" text-anchor="end"  stroke="#202020" stroke-width="0.22">P0.5/AD5</text><text x="520.47" y="253.55" font-size="7.5" fill="#202020" font-weight="normal" text-anchor="start" letter-spacing="-0.6" stroke="#202020" stroke-width="0.22">34</text><rect x="515.27" y="247.98" width="4" height="4" fill="#8a9288"/><path d="M511.87 263.2L529.3 263.2" stroke="#8c4c44" stroke-width="1.2" fill="none"/><text x="507.87" y="266.26" font-size="7.5" fill="#202020" font-weight="normal" text-anchor="end"  stroke="#202020" stroke-width="0.22">P0.6/AD6</text><text x="520.47" y="262.26" font-size="7.5" fill="#202020" font-weight="normal" text-anchor="start" letter-spacing="-0.6" stroke="#202020" stroke-width="0.22">33</text><rect x="515.27" y="256.7" width="4" height="4" fill="#8a9288"/><path d="M511.87 271.91L529.3 271.91" stroke="#8c4c44" stroke-width="1.2" fill="none"/><text x="507.87" y="274.98" font-size="7.5" fill="#202020" font-weight="normal" text-anchor="end"  stroke="#202020" stroke-width="0.22">P0.7/AD7</text><text x="520.47" y="270.98" font-size="7.5" fill="#202020" font-weight="normal" text-anchor="start" letter-spacing="-0.6" stroke="#202020" stroke-width="0.22">32</text><rect x="515.27" y="265.41" width="4" height="4" fill="#8a9288"/><path d="M511.87 289.35L529.3 289.35" stroke="#8c4c44" stroke-width="1.2" fill="none"/><text x="507.87" y="292.42" font-size="7.5" fill="#202020" font-weight="normal" text-anchor="end"  stroke="#202020" stroke-width="0.22">P2.0/A8</text><text x="520.47" y="288.42" font-size="7.5" fill="#202020" font-weight="normal" text-anchor="start" letter-spacing="-0.6" stroke="#202020" stroke-width="0.22">21</text><rect x="515.27" y="282.85" width="4" height="4" fill="#e04848"/><path d="M511.87 298.07L529.3 298.07" stroke="#8c4c44" stroke-width="1.2" fill="none"/><text x="507.87" y="301.14" font-size="7.5" fill="#202020" font-weight="normal" text-anchor="end"  stroke="#202020" stroke-width="0.22">P2.1/A9</text><text x="520.47" y="297.14" font-size="7.5" fill="#202020" font-weight="normal" text-anchor="start" letter-spacing="-0.6" stroke="#202020" stroke-width="0.22">22</text><rect x="515.27" y="291.57" width="4" height="4" fill="#e04848"/><path d="M511.87 306.79L529.3 306.79" stroke="#8c4c44" stroke-width="1.2" fill="none"/><text x="507.87" y="309.85" font-size="7.5" fill="#202020" font-weight="normal" text-anchor="end"  stroke="#202020" stroke-width="0.22">P2.2/A10</text><text x="520.47" y="305.85" font-size="7.5" fill="#202020" font-weight="normal" text-anchor="start" letter-spacing="-0.6" stroke="#202020" stroke-width="0.22">23</text><rect x="515.27" y="300.29" width="4" height="4" fill="#e04848"/><path d="M511.87 315.5L529.3 315.5" stroke="#8c4c44" stroke-width="1.2" fill="none"/><text x="507.87" y="318.57" font-size="7.5" fill="#202020" font-weight="normal" text-anchor="end"  stroke="#202020" stroke-width="0.22">P2.3/A11</text><text x="520.47" y="314.57" font-size="7.5" fill="#202020" font-weight="normal" text-anchor="start" letter-spacing="-0.6" stroke="#202020" stroke-width="0.22">24</text><rect x="515.27" y="309" width="4" height="4" fill="#e04848"/><path d="M511.87 324.22L529.3 324.22" stroke="#8c4c44" stroke-width="1.2" fill="none"/><text x="507.87" y="327.29" font-size="7.5" fill="#202020" font-weight="normal" text-anchor="end"  stroke="#202020" stroke-width="0.22">P2.4/A12</text><text x="520.47" y="323.29" font-size="7.5" fill="#202020" font-weight="normal" text-anchor="start" letter-spacing="-0.6" stroke="#202020" stroke-width="0.22">25</text><rect x="515.27" y="317.72" width="4" height="4" fill="#e04848"/><path d="M511.87 332.94L529.3 332.94" stroke="#8c4c44" stroke-width="1.2" fill="none"/><text x="507.87" y="336.01" font-size="7.5" fill="#202020" font-weight="normal" text-anchor="end"  stroke="#202020" stroke-width="0.22">P2.5/A13</text><text x="520.47" y="332.01" font-size="7.5" fill="#202020" font-weight="normal" text-anchor="start" letter-spacing="-0.6" stroke="#202020" stroke-width="0.22">26</text><rect x="515.27" y="326.44" width="4" height="4" fill="#e04848"/><path d="M511.87 341.66L529.3 341.66" stroke="#8c4c44" stroke-width="1.2" fill="none"/><text x="507.87" y="344.73" font-size="7.5" fill="#202020" font-weight="normal" text-anchor="end"  stroke="#202020" stroke-width="0.22">P2.6/A14</text><text x="520.47" y="340.73" font-size="7.5" fill="#202020" font-weight="normal" text-anchor="start" letter-spacing="-0.6" stroke="#202020" stroke-width="0.22">27</text><rect x="515.27" y="335.16" width="4" height="4" fill="#e04848"/><path d="M511.87 350.38L529.3 350.38" stroke="#8c4c44" stroke-width="1.2" fill="none"/><text x="507.87" y="353.44" font-size="7.5" fill="#202020" font-weight="normal" text-anchor="end"  stroke="#202020" stroke-width="0.22">P2.7/A15</text><text x="520.47" y="349.44" font-size="7.5" fill="#202020" font-weight="normal" text-anchor="start" letter-spacing="-0.6" stroke="#202020" stroke-width="0.22">28</text><rect x="515.27" y="343.88" width="4" height="4" fill="#e04848"/><path d="M511.87 367.81L529.3 367.81" stroke="#8c4c44" stroke-width="1.2" fill="none"/><text x="507.87" y="370.88" font-size="7.5" fill="#202020" font-weight="normal" text-anchor="end"  stroke="#202020" stroke-width="0.22">P3.0/RXD</text><text x="520.47" y="366.88" font-size="7.5" fill="#202020" font-weight="normal" text-anchor="start" letter-spacing="-0.6" stroke="#202020" stroke-width="0.22">10</text><rect x="515.27" y="361.31" width="4" height="4" fill="#4848e8"/><path d="M511.87 376.53L529.3 376.53" stroke="#8c4c44" stroke-width="1.2" fill="none"/><text x="507.87" y="379.6" font-size="7.5" fill="#202020" font-weight="normal" text-anchor="end"  stroke="#202020" stroke-width="0.22">P3.1/TXD</text><text x="520.47" y="375.6" font-size="7.5" fill="#202020" font-weight="normal" text-anchor="start" letter-spacing="-0.6" stroke="#202020" stroke-width="0.22">11</text><rect x="515.27" y="370.03" width="4" height="4" fill="#4848e8"/><path d="M511.87 385.25L529.3 385.25" stroke="#8c4c44" stroke-width="1.2" fill="none"/><text x="507.87" y="388.32" font-size="7.5" fill="#202020" stroke="#202020" stroke-width="0.22" text-anchor="end">P3.2/<tspan text-decoration="overline">INT0</tspan></text><text x="520.47" y="384.32" font-size="7.5" fill="#202020" font-weight="normal" text-anchor="start" letter-spacing="-0.6" stroke="#202020" stroke-width="0.22">12</text><rect x="515.27" y="378.75" width="4" height="4" fill="#4848e8"/><path d="M511.87 393.97L529.3 393.97" stroke="#8c4c44" stroke-width="1.2" fill="none"/><text x="507.87" y="397.03" font-size="7.5" fill="#202020" stroke="#202020" stroke-width="0.22" text-anchor="end">P3.3/<tspan text-decoration="overline">INT1</tspan></text><text x="520.47" y="393.03" font-size="7.5" fill="#202020" font-weight="normal" text-anchor="start" letter-spacing="-0.6" stroke="#202020" stroke-width="0.22">13</text><rect x="515.27" y="387.47" width="4" height="4" fill="#e04848"/><path d="M511.87 402.68L529.3 402.68" stroke="#8c4c44" stroke-width="1.2" fill="none"/><text x="507.87" y="405.75" font-size="7.5" fill="#202020" font-weight="normal" text-anchor="end"  stroke="#202020" stroke-width="0.22">P3.4/T0</text><text x="520.47" y="401.75" font-size="7.5" fill="#202020" font-weight="normal" text-anchor="start" letter-spacing="-0.6" stroke="#202020" stroke-width="0.22">14</text><rect x="515.27" y="396.18" width="4" height="4" fill="#e04848"/><path d="M511.87 411.4L529.3 411.4" stroke="#8c4c44" stroke-width="1.2" fill="none"/><text x="507.87" y="414.47" font-size="7.5" fill="#202020" font-weight="normal" text-anchor="end"  stroke="#202020" stroke-width="0.22">P3.5/T1</text><text x="520.47" y="410.47" font-size="7.5" fill="#202020" font-weight="normal" text-anchor="start" letter-spacing="-0.6" stroke="#202020" stroke-width="0.22">15</text><rect x="515.27" y="404.9" width="4" height="4" fill="#e04848"/><path d="M511.87 420.12L529.3 420.12" stroke="#8c4c44" stroke-width="1.2" fill="none"/><text x="507.87" y="423.19" font-size="7.5" fill="#202020" stroke="#202020" stroke-width="0.22" text-anchor="end">P3.6/<tspan text-decoration="overline">WR</tspan></text><text x="520.47" y="419.19" font-size="7.5" fill="#202020" font-weight="normal" text-anchor="start" letter-spacing="-0.6" stroke="#202020" stroke-width="0.22">16</text><rect x="515.27" y="413.62" width="4" height="4" fill="#e04848"/><path d="M511.87 428.84L529.3 428.84" stroke="#8c4c44" stroke-width="1.2" fill="none"/><text x="507.87" y="431.91" font-size="7.5" fill="#202020" stroke="#202020" stroke-width="0.22" text-anchor="end">P3.7/<tspan text-decoration="overline">RD</tspan></text><text x="520.47" y="427.91" font-size="7.5" fill="#202020" font-weight="normal" text-anchor="start" letter-spacing="-0.6" stroke="#202020" stroke-width="0.22">17</text><rect x="515.27" y="422.34" width="4" height="4" fill="#e04848"/><path d="M346.32 367.81L372.46 367.81" stroke="#3a5e3a" stroke-width="1.25" fill="none"/><circle cx="346.32" cy="367.81" r="2.4" fill="#1a4a1a"/><text x="369.46" y="366.28" font-size="7.5" fill="#202020" font-weight="normal" text-anchor="end"  stroke="#202020" stroke-width="0.22">1.0</text><path d="M346.32 376.53L372.46 376.53" stroke="#3a5e3a" stroke-width="1.25" fill="none"/><circle cx="346.32" cy="376.53" r="2.4" fill="#1a4a1a"/><text x="369.46" y="375" font-size="7.5" fill="#202020" font-weight="normal" text-anchor="end"  stroke="#202020" stroke-width="0.22">1.1</text><path d="M346.32 385.25L372.46 385.25" stroke="#3a5e3a" stroke-width="1.25" fill="none"/><circle cx="346.32" cy="385.25" r="2.4" fill="#1a4a1a"/><text x="369.46" y="383.72" font-size="7.5" fill="#202020" font-weight="normal" text-anchor="end"  stroke="#202020" stroke-width="0.22">1.2</text><path d="M346.32 393.97L372.46 393.97" stroke="#3a5e3a" stroke-width="1.25" fill="none"/><circle cx="346.32" cy="393.97" r="2.4" fill="#1a4a1a"/><text x="369.46" y="392.43" font-size="7.5" fill="#202020" font-weight="normal" text-anchor="end"  stroke="#202020" stroke-width="0.22">1.3</text><path d="M346.32 402.68L372.46 402.68" stroke="#3a5e3a" stroke-width="1.25" fill="none"/><circle cx="346.32" cy="402.68" r="2.4" fill="#1a4a1a"/><text x="369.46" y="401.15" font-size="7.5" fill="#202020" font-weight="normal" text-anchor="end"  stroke="#202020" stroke-width="0.22">1.4</text><path d="M346.32 411.4L372.46 411.4" stroke="#3a5e3a" stroke-width="1.25" fill="none"/><circle cx="346.32" cy="411.4" r="2.4" fill="#1a4a1a"/><text x="369.46" y="409.87" font-size="7.5" fill="#202020" font-weight="normal" text-anchor="end"  stroke="#202020" stroke-width="0.22">1.5</text><path d="M346.32 420.12L372.46 420.12" stroke="#3a5e3a" stroke-width="1.25" fill="none"/><circle cx="346.32" cy="420.12" r="2.4" fill="#1a4a1a"/><text x="369.46" y="418.59" font-size="7.5" fill="#202020" font-weight="normal" text-anchor="end"  stroke="#202020" stroke-width="0.22">1.6</text><path d="M346.32 332.94L372.46 332.94" stroke="#3a5e3a" stroke-width="1.25" fill="none"/><circle cx="346.32" cy="332.94" r="2.4" fill="#1a4a1a"/><text x="369.46" y="331.41" font-size="7.5" fill="#202020" font-weight="normal" text-anchor="end"  stroke="#202020" stroke-width="0.22">VCC</text><path d="M355.04 271.91L372.46 271.91" stroke="#3a5e3a" stroke-width="1.25" fill="none"/><circle cx="355.04" cy="271.91" r="2.4" fill="#1a4a1a"/><text x="363.3" y="269.88" font-size="7.5" fill="#202020" font-weight="normal" text-anchor="start"  stroke="#202020" stroke-width="0.22">RST</text><path d="M529.3 367.81L546.72 367.81" stroke="#3a5e3a" stroke-width="1.25" fill="none"/><circle cx="546.72" cy="367.81" r="2.4" fill="#1a4a1a"/><text x="547.22" y="366.28" font-size="7.5" fill="#202020" font-weight="normal" text-anchor="end"  stroke="#202020" stroke-width="0.22">3.0</text><path d="M529.3 376.53L546.72 376.53" stroke="#3a5e3a" stroke-width="1.25" fill="none"/><circle cx="546.72" cy="376.53" r="2.4" fill="#1a4a1a"/><text x="547.22" y="375" font-size="7.5" fill="#202020" font-weight="normal" text-anchor="end"  stroke="#202020" stroke-width="0.22">3.1</text><path d="M529.3 385.25L546.72 385.25" stroke="#3a5e3a" stroke-width="1.25" fill="none"/><circle cx="546.72" cy="385.25" r="2.4" fill="#1a4a1a"/><text x="547.22" y="383.72" font-size="7.5" fill="#202020" font-weight="normal" text-anchor="end"  stroke="#202020" stroke-width="0.22">3.2</text><path d="M529.3 393.97L546.72 393.97" stroke="#3a5e3a" stroke-width="1.25" fill="none"/><circle cx="546.72" cy="393.97" r="2.4" fill="#1a4a1a"/><text x="547.22" y="392.43" font-size="7.5" fill="#202020" font-weight="normal" text-anchor="end"  stroke="#202020" stroke-width="0.22">3.3</text><path d="M572.4 413.5v12M566.4 419.5h12" stroke="#3030a0" stroke-width="1.2"/><circle cx="572.4" cy="419.5" r="3" fill="none" stroke="#3030a0"/><path d="M389.89 207.89l4 3-4 3" fill="none" stroke="#8c4c40" stroke-width="1"/><rect x="580.8" y="202" width="244.4" height="104" fill="#8a8a8a" stroke="#7a5a5a" stroke-width="1.6"/><rect x="589" y="210.5" width="227" height="82" fill="#3a0202"/><path d="M645.5 210.5V292.5" stroke="#5a1414" stroke-width="1"/><path d="M703 210.5V292.5" stroke="#5a1414" stroke-width="1"/><path d="M759.5 210.5V292.5" stroke="#5a1414" stroke-width="1"/><g transform="translate(601 219.3) skewX(-3)"><rect x="3.5" y="0" width="29.5" height="5.5" rx="2.5" fill="#ff1c1c"/><rect x="31" y="3" width="5.8" height="28.5" rx="2.5" fill="#ff1c1c"/><rect x="31" y="33.5" width="5.8" height="28.5" rx="2.5" fill="#ff1c1c"/><rect x="3.5" y="59.5" width="29.5" height="5.5" rx="2.5" fill="#ff1c1c"/><rect x="0" y="33.5" width="5.8" height="28.5" rx="2.5" fill="#520909"/><rect x="0" y="3" width="5.8" height="28.5" rx="2.5" fill="#520909"/><rect x="3.5" y="29.7" width="29.5" height="5.5" rx="2.5" fill="#ff1c1c"/><circle cx="39" cy="66" r="2" fill="#520909"/></g><g transform="translate(657.6 219.3) skewX(-3)"><rect x="3.5" y="0" width="29.5" height="5.5" rx="2.5" fill="#520909"/><rect x="31" y="3" width="5.8" height="28.5" rx="2.5" fill="#ff1c1c"/><rect x="31" y="33.5" width="5.8" height="28.5" rx="2.5" fill="#ff1c1c"/><rect x="3.5" y="59.5" width="29.5" height="5.5" rx="2.5" fill="#520909"/><rect x="0" y="33.5" width="5.8" height="28.5" rx="2.5" fill="#520909"/><rect x="0" y="3" width="5.8" height="28.5" rx="2.5" fill="#ff1c1c"/><rect x="3.5" y="29.7" width="29.5" height="5.5" rx="2.5" fill="#ff1c1c"/><circle cx="39" cy="66" r="2" fill="#520909"/></g><g transform="translate(714.2 219.3) skewX(-3)"><rect x="3.5" y="0" width="29.5" height="5.5" rx="2.5" fill="#ff1c1c"/><rect x="31" y="3" width="5.8" height="28.5" rx="2.5" fill="#ff1c1c"/><rect x="31" y="33.5" width="5.8" height="28.5" rx="2.5" fill="#ff1c1c"/><rect x="3.5" y="59.5" width="29.5" height="5.5" rx="2.5" fill="#ff1c1c"/><rect x="0" y="33.5" width="5.8" height="28.5" rx="2.5" fill="#520909"/><rect x="0" y="3" width="5.8" height="28.5" rx="2.5" fill="#520909"/><rect x="3.5" y="29.7" width="29.5" height="5.5" rx="2.5" fill="#ff1c1c"/><circle cx="39" cy="66" r="2" fill="#520909"/></g><g transform="translate(770.8 219.3) skewX(-3)"><rect x="3.5" y="0" width="29.5" height="5.5" rx="2.5" fill="#ff1c1c"/><rect x="31" y="3" width="5.8" height="28.5" rx="2.5" fill="#ff1c1c"/><rect x="31" y="33.5" width="5.8" height="28.5" rx="2.5" fill="#ff1c1c"/><rect x="3.5" y="59.5" width="29.5" height="5.5" rx="2.5" fill="#ff1c1c"/><rect x="0" y="33.5" width="5.8" height="28.5" rx="2.5" fill="#ff1c1c"/><rect x="0" y="3" width="5.8" height="28.5" rx="2.5" fill="#ff1c1c"/><rect x="3.5" y="29.7" width="29.5" height="5.5" rx="2.5" fill="#520909"/><circle cx="39" cy="66" r="2" fill="#520909"/></g><text x="590" y="302.77" font-size="7.5" fill="#303030" font-weight="normal" text-anchor="start" letter-spacing="1.5" stroke="#303030" stroke-width="0.22">ABCDEFG</text><text x="646" y="302.77" font-size="7.5" fill="#303030" font-weight="normal" text-anchor="start" letter-spacing="1.5" stroke="#303030" stroke-width="0.22">DP</text><text x="781" y="302.77" font-size="7.5" fill="#303030" font-weight="normal" text-anchor="start" letter-spacing="1.3" stroke="#303030" stroke-width="0.22">1234</text><path d="M589.5 306.79L589.5 341.66" stroke="#5e6a54" stroke-width="1.4" fill="none"/><circle cx="589.5" cy="341.66" r="2.4" fill="#1a4a1a"/><rect x="582" y="312.9" width="5" height="4" fill="#4848e8"/><text transform="translate(587.3 331) rotate(-90)" font-size="7" fill="#202020" stroke="#202020" stroke-width="0.2">1.0</text><path d="M598.22 306.79L598.22 341.66" stroke="#5e6a54" stroke-width="1.4" fill="none"/><circle cx="598.22" cy="341.66" r="2.4" fill="#1a4a1a"/><rect x="590.72" y="312.9" width="5" height="4" fill="#4848e8"/><text transform="translate(596.02 331) rotate(-90)" font-size="7" fill="#202020" stroke="#202020" stroke-width="0.2">1.1</text><path d="M606.93 306.79L606.93 341.66" stroke="#5e6a54" stroke-width="1.4" fill="none"/><circle cx="606.93" cy="341.66" r="2.4" fill="#1a4a1a"/><rect x="599.43" y="312.9" width="5" height="4" fill="#4848e8"/><text transform="translate(604.73 331) rotate(-90)" font-size="7" fill="#202020" stroke="#202020" stroke-width="0.2">1.2</text><path d="M615.64 306.79L615.64 341.66" stroke="#5e6a54" stroke-width="1.4" fill="none"/><circle cx="615.64" cy="341.66" r="2.4" fill="#1a4a1a"/><rect x="608.14" y="312.9" width="5" height="4" fill="#4848e8"/><text transform="translate(613.44 331) rotate(-90)" font-size="7" fill="#202020" stroke="#202020" stroke-width="0.2">1.3</text><path d="M624.36 306.79L624.36 341.66" stroke="#5e6a54" stroke-width="1.4" fill="none"/><circle cx="624.36" cy="341.66" r="2.4" fill="#1a4a1a"/><rect x="616.86" y="312.9" width="5" height="4" fill="#4848e8"/><text transform="translate(622.16 331) rotate(-90)" font-size="7" fill="#202020" stroke="#202020" stroke-width="0.2">1.4</text><path d="M633.07 306.79L633.07 341.66" stroke="#5e6a54" stroke-width="1.4" fill="none"/><circle cx="633.07" cy="341.66" r="2.4" fill="#1a4a1a"/><rect x="625.57" y="312.9" width="5" height="4" fill="#4848e8"/><text transform="translate(630.87 331) rotate(-90)" font-size="7" fill="#202020" stroke="#202020" stroke-width="0.2">1.5</text><path d="M641.78 306.79L641.78 341.66" stroke="#5e6a54" stroke-width="1.4" fill="none"/><circle cx="641.78" cy="341.66" r="2.4" fill="#1a4a1a"/><rect x="634.28" y="312.9" width="5" height="4" fill="#e04848"/><text transform="translate(639.58 331) rotate(-90)" font-size="7" fill="#202020" stroke="#202020" stroke-width="0.2">1.6</text><path d="M650.5 306.79L650.5 315.5" stroke="#8c4c44" stroke-width="1.4" fill="none"/><rect x="643" y="312.9" width="5" height="4" fill="#8a9288"/><path d="M781.97 306.79L781.97 341.66" stroke="#5e6a54" stroke-width="1.4" fill="none"/><circle cx="781.97" cy="341.66" r="2.4" fill="#1a4a1a"/><rect x="774.47" y="312.9" width="5" height="4" fill="#4848e8"/><text transform="translate(779.77 331) rotate(-90)" font-size="7" fill="#202020" stroke="#202020" stroke-width="0.2">3.0</text><path d="M790.69 306.79L790.69 341.66" stroke="#5e6a54" stroke-width="1.4" fill="none"/><circle cx="790.69" cy="341.66" r="2.4" fill="#1a4a1a"/><rect x="783.19" y="312.9" width="5" height="4" fill="#4848e8"/><text transform="translate(788.49 331) rotate(-90)" font-size="7" fill="#202020" stroke="#202020" stroke-width="0.2">3.1</text><path d="M799.4 306.79L799.4 341.66" stroke="#5e6a54" stroke-width="1.4" fill="none"/><circle cx="799.4" cy="341.66" r="2.4" fill="#1a4a1a"/><rect x="791.9" y="312.9" width="5" height="4" fill="#4848e8"/><text transform="translate(797.2 331) rotate(-90)" font-size="7" fill="#202020" stroke="#202020" stroke-width="0.2">3.2</text><path d="M808.11 306.79L808.11 341.66" stroke="#5e6a54" stroke-width="1.4" fill="none"/><circle cx="808.11" cy="341.66" r="2.4" fill="#1a4a1a"/><rect x="800.61" y="312.9" width="5" height="4" fill="#e04848"/><text transform="translate(805.91 331) rotate(-90)" font-size="7" fill="#202020" stroke="#202020" stroke-width="0.2">3.3</text></g></svg><div class="a" style="left:0;top:774px;width:1024px;height:21px;background:#e0dfe3"></div><div class="a" style="left:0;top:774px;width:1024px;height:1px;background:#f4f4f8"></div><div class="a" style="left:3px;top:777px;width:2px;height:17px;border-left:1px solid #fff;border-right:1px solid #a0a0b0"></div><div class="a" style="left:8px;top:777px;width:126px;height:17px;border:1px solid #505058;border-right-color:#303038;border-bottom-color:#303038"></div><div class="a" style="left:8px;top:778px;width:31px;height:15px;background:#e8e8ec;border:1px solid;border-color:#fff #404048 #404048 #fff"></div><svg class="a" style="left:19px;top:780px" width="10" height="11"><path d="M2 1l7 4.5L2 10z" fill="#208020"/></svg><div class="a" style="left:39px;top:778px;width:31px;height:15px;background:#e8e8ec;border:1px solid;border-color:#fff #404048 #404048 #fff"></div><svg class="a" style="left:49px;top:780px" width="12" height="11"><rect x="1" y="1" width="2" height="9" fill="#101010"/><path d="M4 1l7 4.5L4 10z" fill="#101010"/></svg><div class="a" style="left:70px;top:778px;width:31px;height:15px;background:#e8e8ec;border:1px solid;border-color:#fff #404048 #404048 #fff"></div><svg class="a" style="left:81px;top:780px" width="10" height="11"><rect x="1.5" y="1" width="2.5" height="9" fill="#101010"/><rect x="6" y="1" width="2.5" height="9" fill="#101010"/></svg><div class="a" style="left:101px;top:778px;width:31px;height:15px;background:#e8e8ec;border:1px solid;border-color:#fff #404048 #404048 #fff"></div><svg class="a" style="left:112px;top:780px" width="10" height="11"><rect x="1" y="1.5" width="8" height="8" fill="#101010"/></svg><div class="a" style="left:137px;top:778px;width:79px;height:15px;border:1px solid;border-color:#c8c8d0 #fff #fff #c8c8d0"></div><svg class="a" style="left:139px;top:779px" width="14" height="14"><circle cx="7" cy="7" r="6.5" fill="#1a8a1a"/><circle cx="6" cy="5" r="4" fill="#40b040" opacity=".6"/><rect x="6" y="6" width="2.2" height="5" fill="#fff"/><circle cx="7.1" cy="3.8" r="1.2" fill="#fff"/></svg><div class="t" style="left:159px;top:781px;font-size:10px;color:#202020;transform:scaleX(.85);transform-origin:0 0">5 Message(s)</div><div class="a" style="left:223px;top:777px;width:2px;height:17px;border-left:1px solid #fff;border-right:1px solid #a0a0b0"></div><div class="a" style="left:228px;top:778px;width:680px;height:14px;background:#e4e4e8;border:1px solid;border-color:#a0a0a8 #fff #fff #a0a0a8"></div><div class="t" id="anim" style="left:231px;top:781px;font-size:10px;color:#1a4a1a;transform:scaleX(.85);transform-origin:0 0">ANIMATING: 00:00:06.050000 (CPU load 20%)</div><div class="a" style="left:913px;top:777px;width:2px;height:17px;border-left:1px solid #fff;border-right:1px solid #a0a0b0"></div><div class="a" style="left:920px;top:778px;width:101px;height:14px;background:#e4e4e8;border:1px solid;border-color:#a0a0a8 #fff #fff #a0a0a8"></div><div class="t" style="left:934px;top:781px;font-size:10px;color:#202020;transform:scaleX(.9);transform-origin:0 0">-300.0</div><div class="t" style="left:973px;top:781px;font-size:10px;color:#202020;transform:scaleX(.9);transform-origin:0 0">-700.0</div><div class="t" style="left:1010px;top:781px;font-size:10px;color:#5050a0">th</div><div class="a" style="left:0;top:795px;width:1024px;height:24px;background:linear-gradient(#a8a8b8 0px,#f4f4f8 1px,#e4e4ec 3px,#d8d8e2 12px,#c8c8d4 20px,#b8b8c8 24px)"></div><div class="a" style="left:0;top:795px;width:84px;height:24px;border-radius:0 9px 9px 0/0 12px 12px 0;background:linear-gradient(#78c878 0px,#48a848 3px,#389a38 8px,#30902f 14px,#2a822a 20px,#207020 24px);box-shadow:inset -2px 0 3px #1a5a1a"></div><svg class="a" style="left:8px;top:799px" width="16" height="16"><path d="M1 3q3-2 6 0v5q-3-2-6 0z" fill="#f04020"/><path d="M8 3q3 2 6 0v5q-3 2-6 0z" fill="#40c040"/><path d="M1 9q3-2 6 0v5q-3-2-6 0z" fill="#2060e0"/><path d="M8 9q3 2 6 0v5q-3 2-6 0z" fill="#f0c020"/></svg><div class="t" style="left:27px;top:799px;font-size:17px;font-weight:bold;font-style:italic;color:#f4f8f0;text-shadow:1px 1px 1px #1a4a1a">start</div><div class="a" style="left:84px;top:797px;width:30px;height:22px;background:linear-gradient(#d8d8e4,#c8c8d8 50%,#b8b8cc)"></div><svg class="a" style="left:93px;top:801px" width="12" height="14"><rect x="1" y="1" width="4" height="4" fill="#f0f0f0" stroke="#803030"/><rect x="7" y="1" width="4" height="4" fill="#f0f0f0" stroke="#803030"/><rect x="4" y="7" width="4" height="5" fill="#f0f0f0" stroke="#803030"/></svg><div class="a" style="left:115px;top:798px;width:124px;height:19px;border-radius:3px;background:linear-gradient(#fdfdff,#eeeef4 60%,#dcdce6);border:1px solid #a8a8bc"></div><svg class="a" style="left:122px;top:800px" width="15" height="15"><circle cx="7.5" cy="8" r="5.5" fill="none" stroke="#2070d0" stroke-width="2.5"/><path d="M3 8h9" stroke="#2070d0" stroke-width="2"/><path d="M1 13q4-10 13-11" fill="none" stroke="#e0a020" stroke-width="1.4"/></svg><div class="t" style="left:137px;top:803px;font-size:10px;color:#202020">&#272;i&#7879;n t&#7917; Vi&#7879;t Nam ...</div><div class="a" style="left:241px;top:798px;width:124px;height:19px;border-radius:3px;background:linear-gradient(#fdfdff,#eeeef4 60%,#dcdce6);border:1px solid #a8a8bc"></div><svg class="a" style="left:248px;top:800px" width="14" height="14"><circle cx="7" cy="7" r="6.5" fill="#f0b020" stroke="#c07010" stroke-width=".8"/><path d="M3 7q4 6 8 0z" fill="#c02020"/><circle cx="5" cy="4.5" r="1" fill="#401000"/><circle cx="9" cy="4.5" r="1" fill="#401000"/></svg><div class="t" style="left:263px;top:803px;font-size:10px;color:#202020">Yahoo! Messenger</div><div class="a" style="left:368px;top:798px;width:124px;height:19px;border-radius:3px;background:linear-gradient(#fdfdff,#eeeef4 60%,#dcdce6);border:1px solid #a8a8bc"></div><svg class="a" style="left:376px;top:800px" width="11" height="14"><rect x=".5" y=".5" width="9" height="13" rx="1" fill="#b8c8e8" stroke="#5060a0"/><rect x="2" y="2" width="6" height="3" fill="#e8f0ff"/></svg><div class="t" style="left:390px;top:803px;font-size:10px;color:#202020">Calculator</div><div class="a" style="left:495px;top:798px;width:124px;height:19px;border-radius:3px;background:linear-gradient(#fdfdff,#eeeef4 60%,#dcdce6);border:1px solid #a8a8bc"></div><svg class="a" style="left:500px;top:800px" width="13" height="14"><rect x=".5" y=".5" width="12" height="13" fill="#f0e0a0" stroke="#404080"/><path d="M2 3l3 8 2-4" fill="none" stroke="#2030a0" stroke-width="2"/><path d="M7 2l4 9" stroke="#c02020" stroke-width="2"/></svg><div class="t" style="left:517px;top:803px;font-size:10px;color:#202020">quet led  - &#181;Visio...</div><div class="a" style="left:621px;top:798px;width:124px;height:19px;border-radius:3px;background:linear-gradient(#8c8ca0,#9898ac 50%,#8888a0);border:1px solid #70708a"></div><svg class="a" style="left:627px;top:802px" width="14" height="11"><rect x="0" y="0" width="14" height="11" fill="#1c28c8" stroke="#c0c8ff"/><text x="1.5" y="8.5" font-size="7" font-weight="bold" font-family="Liberation Sans" fill="#fff">ISIS</text></svg><div class="t" style="left:643px;top:803px;font-size:10px;color:#f8f8ff">test 7SEG - ISIS ...</div><div class="a" style="left:748px;top:798px;width:124px;height:19px;border-radius:3px;background:linear-gradient(#fdfdff,#eeeef4 60%,#dcdce6);border:1px solid #a8a8bc"></div><svg class="a" style="left:754px;top:800px" width="15" height="15"><circle cx="7.5" cy="8" r="5.5" fill="none" stroke="#2070d0" stroke-width="2.5"/><path d="M3 8h9" stroke="#2070d0" stroke-width="2"/><path d="M1 13q4-10 13-11" fill="none" stroke="#e0a020" stroke-width="1.4"/></svg><div class="t" style="left:770px;top:803px;font-size:10px;color:#202020">T&#7843;i file t&#7915; m&#225;y - ...</div><div class="a" style="left:884px;top:796px;width:140px;height:23px;background:linear-gradient(#fafafc,#eeeef4 40%,#d8d8e4);border-left:1px solid #b0b0c0"></div><svg class="a" style="left:876px;top:800px" width="15" height="15"><circle cx="7.5" cy="7.5" r="6.8" fill="#d8d8e0" stroke="#8080a0"/><path d="M9 4L5.5 7.5 9 11" fill="none" stroke="#fff" stroke-width="2"/></svg><svg class="a" style="left:892px;top:800px" width="12" height="13"><rect x=".5" y=".5" width="11" height="12" fill="#c0d0f0" stroke="#6080c0"/><text x="2.5" y="10" font-size="9" font-family="Liberation Sans" fill="#2050c0">e</text></svg><svg class="a" style="left:907px;top:800px" width="13" height="13"><circle cx="6.5" cy="6.5" r="6" fill="#f0b020" stroke="#c07010" stroke-width=".8"/><path d="M3 6.5q3.5 6 7 0z" fill="#c02020"/></svg><svg class="a" style="left:921px;top:800px" width="13" height="13"><rect x=".5" y=".5" width="12" height="12" fill="#30a030" stroke="#207020"/><path d="M4 3v5q2.5 2 5 0V3" fill="none" stroke="#fff" stroke-width="1.6"/></svg><svg class="a" style="left:936px;top:800px" width="12" height="13"><path d="M1 4h3l4-3v11L4 9H1z" fill="#d03020"/><path d="M10 3v7" stroke="#303030" stroke-width="1.5"/></svg><svg class="a" style="left:950px;top:800px" width="13" height="13"><rect x="1" y="4" width="7" height="6" fill="#3050a0"/><rect x="5" y="1" width="7" height="6" fill="#4060c0" stroke="#203070"/></svg><div class="t" style="left:969px;top:803px;font-size:10px;color:#202020">10:16 PM</div></body></html>
